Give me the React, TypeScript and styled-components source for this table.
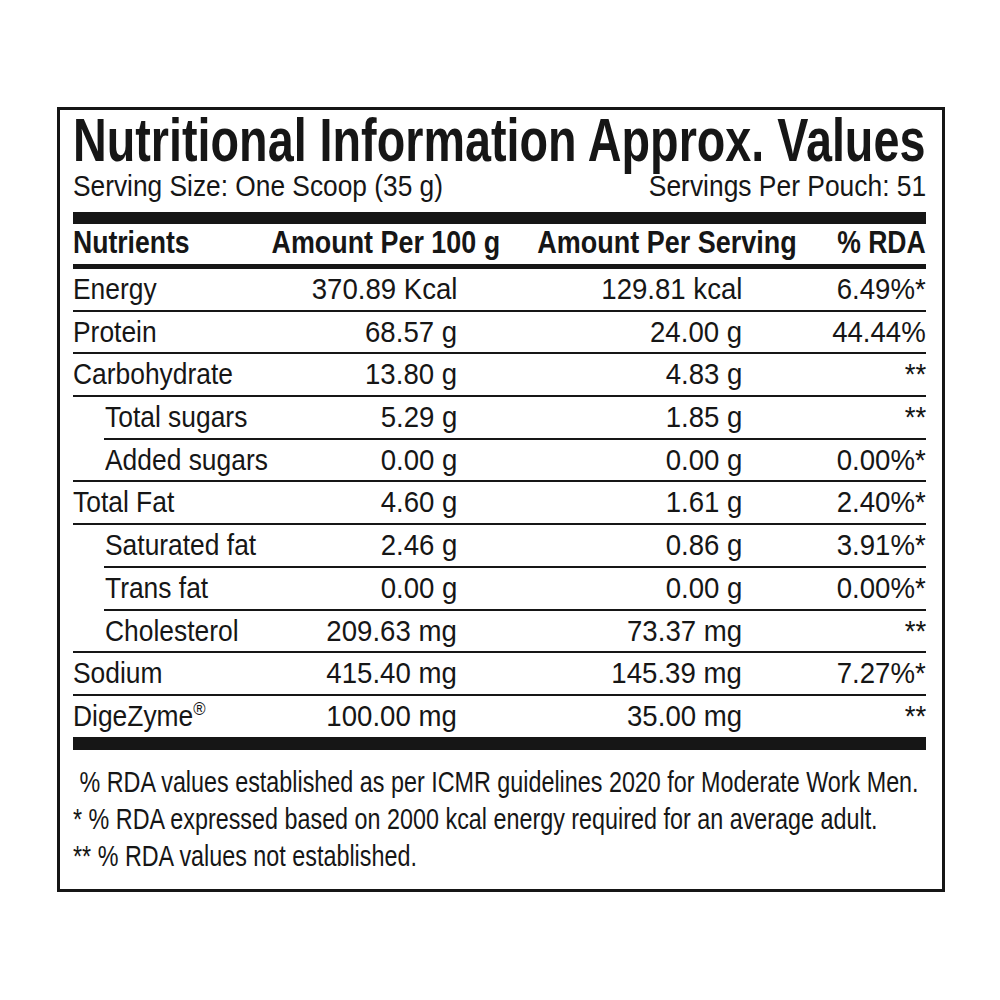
import React from 'react';
import styled, { createGlobalStyle } from 'styled-components';

const GlobalStyle = createGlobalStyle`
  html, body {
    margin: 0;
    padding: 0;
    background: #ffffff;
  }
  body {
    font-family: "Liberation Sans", Arial, Helvetica, sans-serif;
    color: #161616;
  }
`;

// Helvetica Condensed is not installed, so each text run is narrowed on its own.
const Squeeze = styled.span<{ $s: number; $o?: 'left' | 'right' }>`
  display: inline-block;
  flex: none;
  white-space: pre;
  transform: scaleX(${(p) => p.$s});
  transform-origin: ${(p) => p.$o ?? 'left'} center;
`;

const Page = styled.div`
  width: 1000px;
  height: 1000px;
  padding: 107px 0 0 57px;
  box-sizing: border-box;
`;

const Label = styled.section`
  width: 888px;
  height: 785px;
  box-sizing: border-box;
  border: 3px solid #161616;
  padding: 0 16px 0 13px;
  display: flex;
  flex-direction: column;
  overflow: clip;
`;

const Title = styled.h1`
  margin: 0;
  font-size: 61px;
  line-height: 61px;
  font-weight: 700;
  white-space: nowrap;
`;

const ServingRow = styled.div`
  display: flex;
  justify-content: space-between;
  font-size: 30px;
  line-height: 30px;
  white-space: nowrap;
`;

const Bar = styled.div<{ $h: number; $gap?: number }>`
  height: ${(p) => p.$h}px;
  background: #161616;
  margin-top: ${(p) => p.$gap ?? 0}px;
  flex: none;
`;

const HeadRow = styled.div`
  display: grid;
  grid-template-columns: 189px 238px 297px 129px;
  height: 40px;
  flex: none;
`;

const HeadCell = styled.div<{ $left?: boolean }>`
  display: flex;
  justify-content: ${(p) => (p.$left ? 'flex-start' : 'flex-end')};
  font-size: 32px;
  font-weight: 700;
  line-height: 36px;
  white-space: nowrap;
`;

const Row = styled.div`
  display: grid;
  grid-template-columns: 189px 238px 297px 129px;
  height: 40.7px;
  flex: none;
`;

const RowLine = styled.div<{ $indent: boolean }>`
  height: 2px;
  flex: none;
  background: #161616;
  margin-left: ${(p) => (p.$indent ? 31 : 0)}px;
`;

const NameCell = styled.div<{ $sub?: boolean }>`
  font-size: 30px;
  line-height: 40.7px;
  padding-left: ${(p) => (p.$sub ? 32 : 0)}px;
  white-space: nowrap;
`;

const ValueCell = styled.div<{ $pad: number }>`
  display: flex;
  justify-content: flex-end;
  font-size: 30px;
  line-height: 40.7px;
  padding-right: ${(p) => p.$pad}px;
  white-space: nowrap;
`;

const Reg = styled.sup`
  font-size: 19px;
  vertical-align: 11px;
  line-height: 0;
`;

const Notes = styled.div`
  margin-top: 14px;
  font-size: 29px;
  line-height: 37px;
`;

const NoteLine = styled.div`
  white-space: nowrap;
`;

type Nutrient = {
  name: React.ReactNode;
  per100: string;
  perServing: string;
  rda: string;
  sub?: boolean;
};

const nutrients: Nutrient[] = [
  { name: 'Energy', per100: '370.89 Kcal', perServing: '129.81 kcal', rda: '6.49%*' },
  { name: 'Protein', per100: '68.57 g', perServing: '24.00 g', rda: '44.44%' },
  { name: 'Carbohydrate', per100: '13.80 g', perServing: '4.83 g', rda: '**' },
  { name: 'Total sugars', per100: '5.29 g', perServing: '1.85 g', rda: '**', sub: true },
  { name: 'Added sugars', per100: '0.00 g', perServing: '0.00 g', rda: '0.00%*', sub: true },
  { name: 'Total Fat', per100: '4.60 g', perServing: '1.61 g', rda: '2.40%*' },
  { name: 'Saturated fat', per100: '2.46 g', perServing: '0.86 g', rda: '3.91%*', sub: true },
  { name: 'Trans fat', per100: '0.00 g', perServing: '0.00 g', rda: '0.00%*', sub: true },
  { name: 'Cholesterol', per100: '209.63 mg', perServing: '73.37 mg', rda: '**', sub: true },
  { name: 'Sodium', per100: '415.40 mg', perServing: '145.39 mg', rda: '7.27%*' },
  {
    name: (
      <>
        DigeZyme<Reg>®</Reg>
      </>
    ),
    per100: '100.00 mg',
    perServing: '35.00 mg',
    rda: '**',
  },
];

const notes = [
  ' % RDA values established as per ICMR guidelines 2020 for Moderate Work Men.',
  '* % RDA expressed based on 2000 kcal energy required for an average adult.',
  '** % RDA values not established.',
];

export default function App() {
  return (
    <Page>
      <GlobalStyle />
      <Label>
        <Title>
          <Squeeze $s={0.766}>Nutritional Information Approx. Values</Squeeze>
        </Title>
        <ServingRow>
          <Squeeze $s={0.877}>Serving Size: One Scoop (35 g)</Squeeze>
          <Squeeze $s={0.88} $o="right">
            Servings Per Pouch: 51
          </Squeeze>
        </ServingRow>
        <Bar $h={12} $gap={11} />
        <HeadRow>
          <HeadCell $left>
            <Squeeze $s={0.83}>Nutrients</Squeeze>
          </HeadCell>
          <HeadCell>
            <Squeeze $s={0.84} $o="right">
              Amount Per 100 g
            </Squeeze>
          </HeadCell>
          <HeadCell>
            <Squeeze $s={0.843} $o="right">
              Amount Per Serving
            </Squeeze>
          </HeadCell>
          <HeadCell>
            <Squeeze $s={0.83} $o="right">
              % RDA
            </Squeeze>
          </HeadCell>
        </HeadRow>
        <Bar $h={5} />
        {nutrients.map((n, i) => {
          const next = nutrients[i + 1];
          const last = i === nutrients.length - 1;
          return (
            <React.Fragment key={i}>
              <Row>
                <NameCell $sub={n.sub}>
                  <Squeeze $s={0.88}>{n.name}</Squeeze>
                </NameCell>
                <ValueCell $pad={43}>
                  <Squeeze $s={0.92} $o="right">
                    {n.per100}
                  </Squeeze>
                </ValueCell>
                <ValueCell $pad={55}>
                  <Squeeze $s={0.92} $o="right">
                    {n.perServing}
                  </Squeeze>
                </ValueCell>
                <ValueCell $pad={0}>
                  <Squeeze $s={0.92} $o="right">
                    {n.rda}
                  </Squeeze>
                </ValueCell>
              </Row>
              {!last && <RowLine $indent={!!(n.sub && next?.sub)} />}
            </React.Fragment>
          );
        })}
        <Bar $h={13} />
        <Notes>
          {notes.map((t) => (
            <NoteLine key={t}>
              <Squeeze $s={0.805}>{t}</Squeeze>
            </NoteLine>
          ))}
        </Notes>
      </Label>
    </Page>
  );
}
